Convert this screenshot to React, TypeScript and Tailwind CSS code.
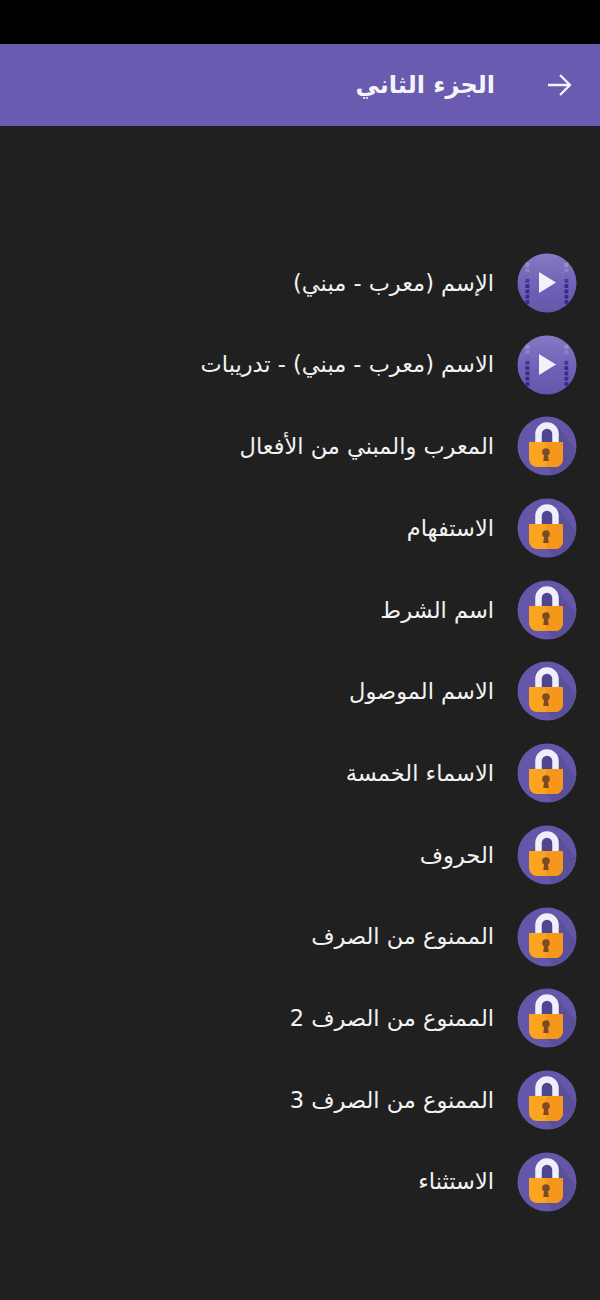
import { FC } from "react";

const lessons = [
  { title: "الإسم (معرب - مبني)", open: true },
  { title: "الاسم (معرب - مبني) - تدريبات", open: true },
  { title: "المعرب والمبني من الأفعال", open: false },
  { title: "الاستفهام", open: false },
  { title: "اسم الشرط", open: false },
  { title: "الاسم الموصول", open: false },
  { title: "الاسماء الخمسة", open: false },
  { title: "الحروف", open: false },
  { title: "الممنوع من الصرف", open: false },
  { title: "الممنوع من الصرف 2", open: false },
  { title: "الممنوع من الصرف 3", open: false },
  { title: "الاستثناء", open: false },
];

const holes = [0, 1, 2, 3, 4, 5, 6, 7];
const holeColors = ["#9a90cc", "#8d82c4", "#6f66b4", "#3f3896", "#332d8a", "#332d8a", "#332d8a", "#332d8a"];

const PlayIcon: FC = () => (
  <svg width="60" height="60" viewBox="0 0 60 60" className="shrink-0">
    <defs>
      <linearGradient id="playBg" x1="0" y1="0" x2="0" y2="1">
        <stop offset="0" stopColor="#8779c4" />
        <stop offset="0.5" stopColor="#7163b8" />
        <stop offset="1" stopColor="#6656ac" />
      </linearGradient>
    </defs>
    <circle cx="30" cy="30" r="29.5" fill="url(#playBg)" />
    {holes.map(i => (
      <g key={i}>
        <rect x="8.5" y={10 + i * 5.3} width="3.8" height="3.8" fill={holeColors[i]} />
        <rect x="47.5" y={10 + i * 5.3} width="3.8" height="3.8" fill={holeColors[i]} />
      </g>
    ))}
    <path d="M22 19l17 10.5L22 40z" fill="#f3f1fb" />
  </svg>
);

const LockIcon: FC = () => (
  <svg width="60" height="60" viewBox="0 0 60 60" className="shrink-0">
    <circle cx="30" cy="30" r="29.5" fill="#6656aa" />
    <path d="M42 12l17 22a29.5 29.5 0 0 1-23 25L30 50z" fill="#5a4f9a" />
    <path d="M21.5 27V18a8.5 8.5 0 0 1 17 0v9" fill="#4f4690" />
    <path d="M21.5 27V18a8.5 8.5 0 0 1 17 0v9" fill="none" stroke="#f0eef8" strokeWidth="6.5" />
    <path d="M12 26h34v17a8 8 0 0 1-8 8H20a8 8 0 0 1-8-8z" fill="#fba41f" />
    <path d="M29 26h17v17a8 8 0 0 1-8 8h-9z" fill="#f4971a" />
    <circle cx="29" cy="36" r="3.8" fill="#7d4a26" />
    <path d="M27.4 37h3.2l1.2 8h-5.6z" fill="#7d4a26" />
  </svg>
);

const App: FC = () => {
  return (
    <div dir="rtl" className="w-[600px] h-[1300px] bg-[#202020] font-['DejaVu_Sans',sans-serif] overflow-hidden">
      <div className="h-11 bg-black" />
      <header className="h-[82px] bg-[#6a5bb0] flex items-center pr-[27px] gap-[50px]">
        <svg width="28" height="28" viewBox="0 0 28 28" fill="none" stroke="#f5f3fb" strokeWidth="2.3" className="shrink-0">
          <path d="M3 14h22M15 4l10 10-10 10" />
        </svg>
        <h1 className="text-[24px] font-bold text-[#f5f3fb] leading-none">الجزء الثاني</h1>
      </header>
      <ul className="pt-[127px] pr-[23px] flex flex-col gap-[21.7px]">
        {lessons.map(lesson => (
          <li key={lesson.title} className="h-[60px] flex items-center gap-[23px]">
            {lesson.open ? <PlayIcon /> : <LockIcon />}
            <span className="text-[22.5px] text-[#f2f2f2] leading-none">{lesson.title}</span>
          </li>
        ))}
      </ul>
    </div>
  );
};

export default App;
